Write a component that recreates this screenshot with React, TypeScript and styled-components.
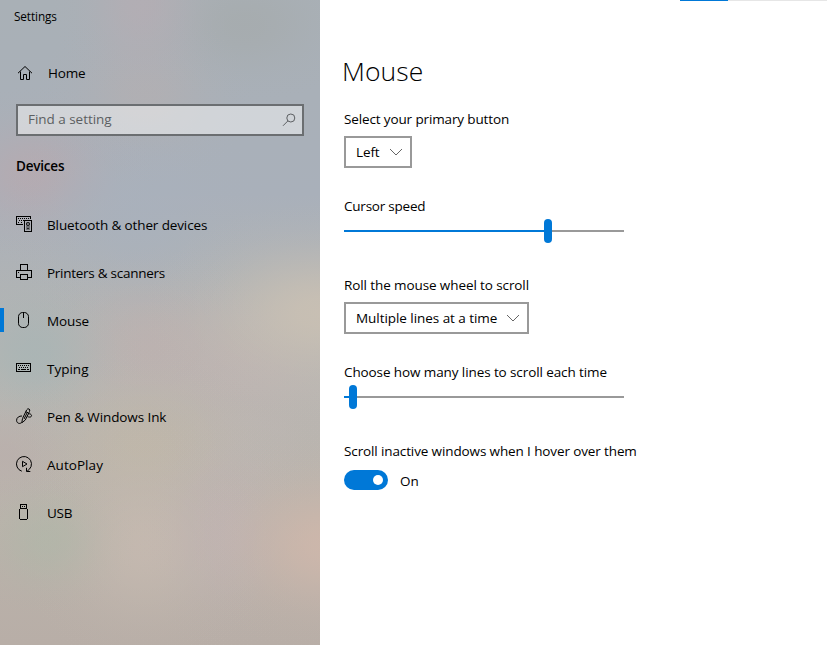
import React from "react";
import styled, { createGlobalStyle } from "styled-components";

const Global = createGlobalStyle`
  * { box-sizing: border-box; }
  html, body { margin: 0; padding: 0; }
  body { background: #fff; color: #000; overflow: hidden; font: 13.5px/20px "Open Sans", "Noto Sans", sans-serif; }
`;

const Window = styled.div`
  display: flex;
  width: 827px;
  height: 645px;
`;

/* A soft colour spot with a bell-shaped falloff. */
const glow = (x: number, y: number, rx: number, ry: number, rgb: string, a: number) => {
  const stops = [1, 0.94, 0.78, 0.57, 0.37, 0.2, 0.09, 0.03, 0].map(
    (k, i) => `rgba(${rgb}, ${(k * a).toFixed(3)}) ${i * 12.5}%`
  );
  return `radial-gradient(ellipse ${rx}px ${ry}px at ${x}px ${y}px, ${stops.join(", ")})`;
};

const acrylic = [
  glow(325, 545, 140, 110, "210, 184, 171", 0.75),
  glow(48, 540, 90, 80, "174, 183, 168", 0.6),
  glow(225, 530, 90, 130, "192, 179, 180", 0.6),
  glow(145, 545, 130, 130, "200, 187, 177", 0.7),
  glow(145, 445, 140, 100, "192, 183, 168", 0.75),
  glow(240, 440, 110, 90, "188, 182, 178", 0.6),
  glow(5, 455, 100, 80, "186, 174, 171", 0.6),
  glow(320, 312, 180, 110, "203, 193, 179", 0.85),
  glow(35, 355, 110, 100, "168, 181, 181", 0.8),
  glow(150, 345, 140, 100, "189, 177, 175", 0.75),
  glow(240, 370, 140, 100, "190, 180, 178", 0.7),
  glow(135, 220, 140, 120, "169, 177, 188", 0.75),
  glow(35, 175, 120, 90, "184, 169, 174", 0.75),
  glow(142, 5, 90, 110, "182, 173, 179", 0.7),
  glow(145, 95, 110, 90, "181, 175, 176", 0.6),
  glow(245, 25, 120, 80, "165, 170, 171", 0.65),
  "linear-gradient(#a9b0b6 0, #a9b0ba 30%, #b0b3b5 44%, #b9b6b2 60%, #bab3ab 80%, #b8aea7 100%)",
].join(", ");

const Sidebar = styled.aside`
  width: 320px;
  flex: none;
  display: flex;
  flex-direction: column;
  background: ${acrylic};
`;

const Text = styled.span<{ $track?: number }>`
  letter-spacing: ${(p) => p.$track ?? -0.11}px;
  white-space: nowrap;
`;

const Caption = styled.div`
  height: 49px;
  padding: 6px 14px 0;
  font-size: 11.8px;
`;

const HomeLink = styled.div`
  display: flex;
  align-items: center;
  height: 48px;
  padding-left: 16px;
  gap: 14px;
`;

const Search = styled.div`
  display: flex;
  align-items: center;
  justify-content: space-between;
  width: 288px;
  height: 32px;
  margin: 7px 16px 0;
  padding: 0 6px 0 10px;
  border: 2px solid #6b6e71;
  background: rgba(255, 255, 255, 0.46);
  color: #5c5f62;
`;

const SearchText = styled(Text)`
  padding-bottom: 2px;
`;

const Category = styled.div`
  height: 64px;
  padding: 20px 16px 0;
  font-weight: 600;
`;

const Nav = styled.nav`
  display: flex;
  flex-direction: column;
`;

const NavItem = styled.div<{ $active?: boolean }>`
  display: flex;
  align-items: center;
  height: 48px;
  gap: 14px;
  &::before {
    content: "";
    width: 4px;
    height: 24px;
    margin-right: -2px;
    background: ${(p) => (p.$active ? "#0078d7" : "transparent")};
  }
`;

const ToggleText = styled(Text)`
  padding-top: 2px;
`;

const NavText = styled(Text)`
  padding-top: 1px;
`;

const Icon = styled.svg`
  display: block;
  flex: none;
  fill: none;
  stroke: #000;
  stroke-width: 1;
`;

const Main = styled.main`
  flex: 1;
  display: flex;
  flex-direction: column;
`;

const LoadingBar = styled.div`
  align-self: flex-end;
  width: 147px;
  height: 1px;
  background: linear-gradient(to right, #0078d7 48px, #e6e6e6 48px);
`;

const Title = styled.h1`
  margin: 48px 0 0 22px;
  height: 60px;
  font-size: 26.5px;
  line-height: 44px;
  font-weight: 340;
`;

const Setting = styled.section<{ $height: number }>`
  height: ${(p) => p.$height}px;
  padding-left: 24px;
  display: flex;
  flex-direction: column;
  align-items: flex-start;
`;

const Select = styled.div<{ $width: number }>`
  display: flex;
  align-items: center;
  justify-content: space-between;
  width: ${(p) => p.$width}px;
  height: 32px;
  margin-top: 7px;
  padding: 0 7px 0 10px;
  border: 2px solid #999;
`;

const Slider = styled.div`
  display: flex;
  align-items: center;
  width: 280px;
  height: 24px;
  margin-top: 3px;
`;

const Filled = styled.div<{ $width: number }>`
  width: ${(p) => p.$width}px;
  height: 2px;
  background: #0078d7;
`;

const Thumb = styled.div`
  width: 8px;
  height: 24px;
  border-radius: 4px;
  background: #0078d7;
`;

const Rest = styled.div`
  flex: 1;
  height: 2px;
  background: #999;
`;

const ToggleRow = styled.div`
  display: flex;
  align-items: center;
  height: 20px;
  gap: 12px;
  margin-top: 9px;
`;

const Toggle = styled.div`
  display: flex;
  align-items: center;
  justify-content: flex-end;
  width: 44px;
  height: 20px;
  padding-right: 5px;
  border-radius: 10px;
  background: #0078d7;
`;

const Knob = styled.div`
  width: 10px;
  height: 10px;
  border-radius: 50%;
  background: #fff;
`;

const HomeIcon = () => (
  <Icon width="18" height="16" viewBox="0 0 18 16">
    <path d="M2 8.200 9 1.500l7 6.700M4.500 6.500v8h3v-5h3v5h3v-8" />
  </Icon>
);

const SearchIcon = () => (
  <Icon width="14" height="14" viewBox="0 0 14 14">
    <g stroke="#5c5f62">
      <circle cx="8.800" cy="5" r="4" />
      <path d="M5.900 7.900 1 12.800" />
    </g>
  </Icon>
);

const Chevron = () => (
  <Icon width="14" height="8" viewBox="0 0 14 8">
    <path stroke="#666" d="M1 1l6 6 6-6" />
  </Icon>
);

const BluetoothIcon = () => (
  <Icon width="17" height="16" viewBox="0 0 17 16" shapeRendering="crispEdges">
    <path d="M7 8.500H.5v-8h14V3" />
    <path d="M2 2.500h11M3 4.500h5M2 6.500h2M5 6.500h2" strokeDasharray="1 1" />
    <rect x="8.500" y="4.500" width="7" height="11" />
    <rect x="10" y="6" width="4" height="8" fill="#000" fillOpacity=".35" stroke="none" />
    <path d="M11 6.500h2M10.500 7v2M13.500 7v2M11 9.500h2M11 12.500h2" strokeOpacity=".7" />
  </Icon>
);

const PrinterIcon = () => (
  <Icon width="17" height="16" viewBox="0 0 17 16" shapeRendering="crispEdges">
    <path d="M4.500 6V.5h7V6M4 13.500H.5v-7h15v7H12M2 8.500h1" />
    <rect x="4.500" y="10.500" width="7" height="5" />
  </Icon>
);

const MouseIcon = () => (
  <Icon width="17" height="16" viewBox="0 0 17 16">
    <rect x="2.500" y=".5" width="10" height="15" rx="4.200" />
    <path d="M7.500 1v5" />
  </Icon>
);

const KeyboardIcon = () => (
  <Icon width="17" height="16" viewBox="0 0 17 16" shapeRendering="crispEdges">
    <rect x=".5" y="3.500" width="14" height="8" />
    <path d="M2 5.500h11M3 7.500h10" strokeDasharray="1 1" />
    <path d="M2 9.500h2M5 9.500h5M11 9.500h2" />
  </Icon>
);

const PenIcon = () => (
  <Icon width="17" height="16" viewBox="0 0 17 16">
    <path d="M5.800 14.800 6.500 10.500 10.600 2q1.200-1.900 2.500-1 1.200.8.400 2.500L9.300 12zM9.800 3.600l2.700 1.500M8 11l3.500-7" />
    <path d="M6 8C3.200 7.800.6 9.600.6 12.200c0 3.400 3.400 4 5 2.300M12.300 5.800c2.300-.4 4 1.400 2.900 2.700-.9 1-2.300.5-3.700.2" />
  </Icon>
);

const AutoPlayIcon = () => (
  <Icon width="17" height="16" viewBox="0 0 17 16">
    <path d="M5.800 15.200A7.500 7.500 0 1 1 13.300 13.300L11 15.400M10.500 11.800v3.700h3.800M6.500 5.300v5.400L11 8z" />
  </Icon>
);

const UsbIcon = () => (
  <Icon width="17" height="16" viewBox="0 0 17 16" shapeRendering="crispEdges">
    <path d="M4.500 4V.5h6V4M6 2.500h1M8 2.500h1" />
    <path d="M4 4.500h7M3.500 5v10M11.500 5v10M4 15.500h7" />
  </Icon>
);

const items: { label: string; icon: React.ReactNode; active?: boolean; track?: number }[] = [
  { label: "Bluetooth & other devices", icon: <BluetoothIcon />, track: -0.12 },
  { label: "Printers & scanners", icon: <PrinterIcon />, track: -0.27 },
  { label: "Mouse", icon: <MouseIcon />, active: true },
  { label: "Typing", icon: <KeyboardIcon />, track: 0 },
  { label: "Pen & Windows Ink", icon: <PenIcon />, track: -0.09 },
  { label: "AutoPlay", icon: <AutoPlayIcon />, track: 0.05 },
  { label: "USB", icon: <UsbIcon />, track: -0.3 },
];

export default function App() {
  return (
    <>
      <Global />
      <Window>
        <Sidebar>
          <Caption><Text>Settings</Text></Caption>
          <HomeLink><HomeIcon /><Text $track={-0.2}>Home</Text></HomeLink>
          <Search><SearchText $track={-0.03}>Find a setting</SearchText><SearchIcon /></Search>
          <Category><Text $track={-0.2}>Devices</Text></Category>
          <Nav>
            {items.map((item) => (
              <NavItem key={item.label} $active={item.active}>
                {item.icon}
                <NavText $track={item.track}>{item.label}</NavText>
              </NavItem>
            ))}
          </Nav>
        </Sidebar>
        <Main>
          <LoadingBar />
          <Title><Text $track={0.1}>Mouse</Text></Title>
          <Setting $height={87}>
            <Text $track={-0.13}>Select your primary button</Text>
            <Select $width={68}><Text>Left</Text><Chevron /></Select>
          </Setting>
          <Setting $height={79}>
            <Text $track={-0.22}>Cursor speed</Text>
            <Slider><Filled $width={200} /><Thumb /><Rest /></Slider>
          </Setting>
          <Setting $height={87}>
            <Text $track={-0.1}>Roll the mouse wheel to scroll</Text>
            <Select $width={185}><Text $track={-0.05}>Multiple lines at a time</Text><Chevron /></Select>
          </Setting>
          <Setting $height={79}>
            <Text $track={-0.1}>Choose how many lines to scroll each time</Text>
            <Slider><Filled $width={5} /><Thumb /><Rest /></Slider>
          </Setting>
          <Setting $height={60}>
            <Text $track={-0.12}>Scroll inactive windows when I hover over them</Text>
            <ToggleRow><Toggle><Knob /></Toggle><ToggleText>On</ToggleText></ToggleRow>
          </Setting>
        </Main>
      </Window>
    </>
  );
}
